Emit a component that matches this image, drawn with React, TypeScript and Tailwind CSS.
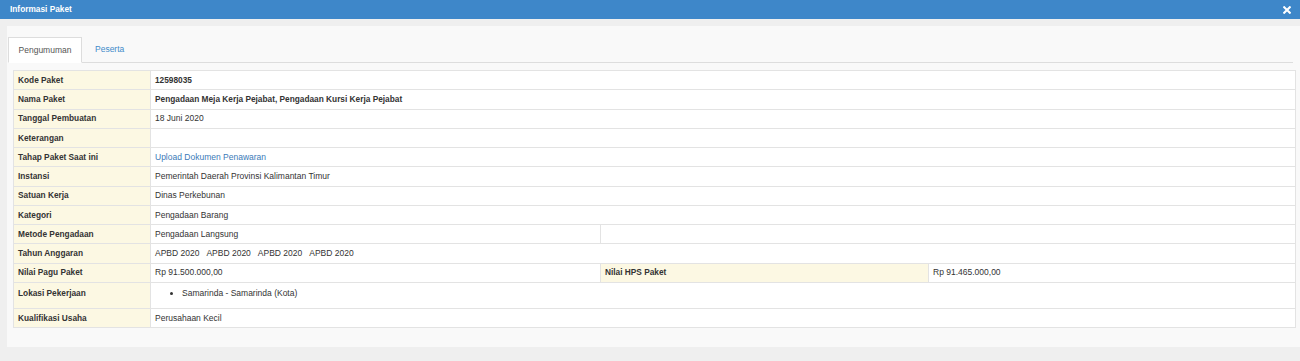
import React from "react";

const L = "bg-[#fcf8e3] font-bold text-[8.3px] text-[#333] border border-[#e3e3e3] px-[4px] h-[19.25px] align-middle";
const V = "bg-white text-[#333] border border-[#e3e3e3] px-[4px] h-[19.25px] align-middle";

export default function App() {
  return (
    <div
      className="w-[1300px] h-[361px] bg-[#efefef] overflow-hidden text-[8.5px] leading-none"
      style={{ fontFamily: '"Liberation Sans", Arial, sans-serif' }}
    >
      <div className="h-[19px] bg-[#3e87c9] flex items-center justify-between pl-[10px] pr-[9px]">
        <span className="text-white font-bold text-[8.3px]">Informasi Paket</span>
        <svg width="8" height="8" viewBox="0 0 10 10" className="block">
          <path d="M1.5 1.5 L8.5 8.5 M8.5 1.5 L1.5 8.5" stroke="white" strokeWidth="2.6" strokeLinecap="square" />
        </svg>
      </div>
      <div className="pl-[7px] pt-[7px]">
        <div className="bg-[#f9f9f9] pt-[11px] pb-[19px]">
          <div className="flex items-end ml-[1px] mr-[7px] border-b border-[#dddddd] h-[26px]">
            <div className="h-[26px] w-[74px] bg-white border border-[#dddddd] border-b-white -mb-[1px] flex items-center justify-center text-[#555]">
              Pengumuman
            </div>
            <div className="h-[26px] px-[13px] flex items-center text-[#428bca]">Peserta</div>
          </div>
          <div className="pl-[6px] pt-[7px]">
            <table className="border-collapse w-[1282px] table-fixed">
              <colgroup>
                <col className="w-[137px]" />
                <col className="w-[450px]" />
                <col className="w-[328px]" />
                <col className="w-[367px]" />
              </colgroup>
              <tbody>
                <tr>
                  <td className={L}>Kode Paket</td>
                  <td className={V + " font-bold text-[8.3px]"} colSpan={3}>12598035</td>
                </tr>
                <tr>
                  <td className={L}>Nama Paket</td>
                  <td className={V + " font-bold text-[8.3px]"} colSpan={3}>Pengadaan Meja Kerja Pejabat, Pengadaan Kursi Kerja Pejabat</td>
                </tr>
                <tr>
                  <td className={L}>Tanggal Pembuatan</td>
                  <td className={V} colSpan={3}>18 Juni 2020</td>
                </tr>
                <tr>
                  <td className={L}>Keterangan</td>
                  <td className={V} colSpan={3}></td>
                </tr>
                <tr>
                  <td className={L}>Tahap Paket Saat ini</td>
                  <td className={V} colSpan={3}>
                    <span className="text-[#3a7ab8]">Upload Dokumen Penawaran</span>
                  </td>
                </tr>
                <tr>
                  <td className={L}>Instansi</td>
                  <td className={V} colSpan={3}>Pemerintah Daerah Provinsi Kalimantan Timur</td>
                </tr>
                <tr>
                  <td className={L}>Satuan Kerja</td>
                  <td className={V} colSpan={3}>Dinas Perkebunan</td>
                </tr>
                <tr>
                  <td className={L}>Kategori</td>
                  <td className={V} colSpan={3}>Pengadaan Barang</td>
                </tr>
                <tr>
                  <td className={L}>Metode Pengadaan</td>
                  <td className={V}>Pengadaan Langsung</td>
                  <td className={V} colSpan={2}></td>
                </tr>
                <tr>
                  <td className={L}>Tahun Anggaran</td>
                  <td className={V} colSpan={3}>
                    <span className="mr-[7px]">APBD 2020</span>
                    <span className="mr-[7px]">APBD 2020</span>
                    <span className="mr-[7px]">APBD 2020</span>
                    <span>APBD 2020</span>
                  </td>
                </tr>
                <tr>
                  <td className={L}>Nilai Pagu Paket</td>
                  <td className={V}>Rp 91.500.000,00</td>
                  <td className={L}>Nilai HPS Paket</td>
                  <td className={V}>Rp 91.465.000,00</td>
                </tr>
                <tr>
                  <td className="bg-[#fcf8e3] font-bold text-[8.3px] text-[#333] border border-[#e3e3e3] px-[4px] h-[26px] align-top pt-[6px]">
                    Lokasi Pekerjaan
                  </td>
                  <td className="bg-white text-[#333] border border-[#e3e3e3] px-[4px] h-[26px] align-top pt-[6px]" colSpan={3}>
                    <ul className="list-disc pl-[27px]">
                      <li>Samarinda - Samarinda (Kota)</li>
                    </ul>
                  </td>
                </tr>
                <tr>
                  <td className={L}>Kualifikasi Usaha</td>
                  <td className={V} colSpan={3}>Perusahaan Kecil</td>
                </tr>
              </tbody>
            </table>
          </div>
        </div>
      </div>
    </div>
  );
}
